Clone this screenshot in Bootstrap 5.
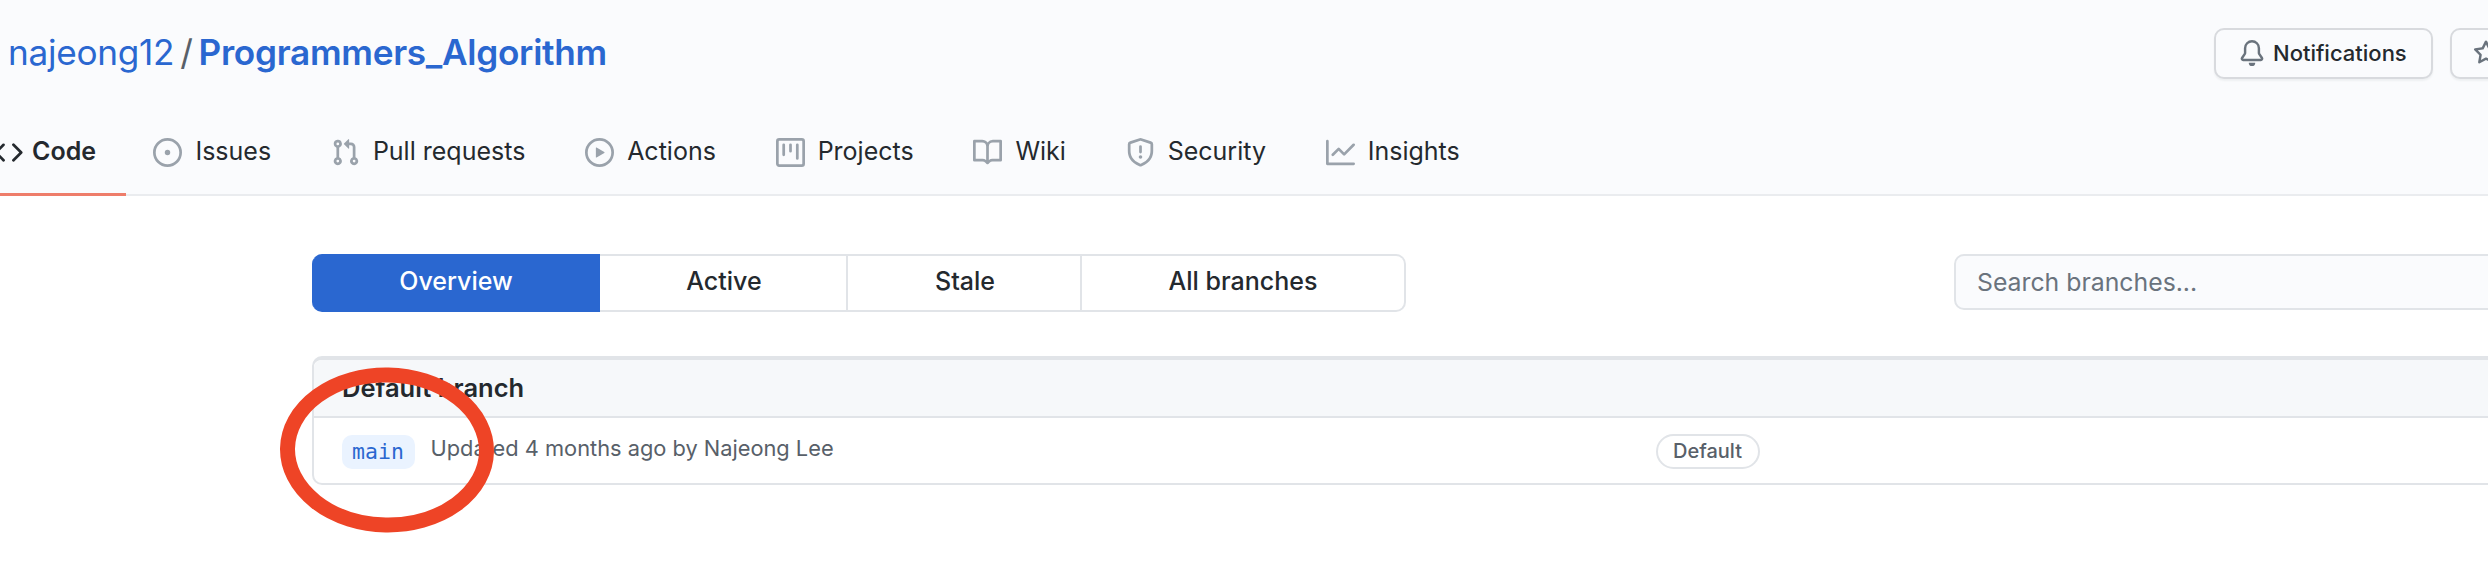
<!DOCTYPE html>
<html lang="en">
<head>
<meta charset="utf-8">
<title>Branches</title>
<link href="https://cdn.jsdelivr.net/npm/bootstrap@5.3.0/dist/css/bootstrap.min.css" rel="stylesheet">
<style>
html, body { margin: 0; height: 562px; overflow: hidden; background: #fff; }
body { font-family: Inter, "Liberation Sans", sans-serif; color: #24292e; position: relative; width: 2488px; }
.repo-head { background: #fafbfd; border-bottom: 2px solid #eaecef; height: 196px; width: 2488px; }
.repo-top { height: 106px; }
.repo-title { width: 600px; font-size: 35.2px; line-height: 40px; color: #2a67d0; margin-left: 8px; margin-top: -2px; letter-spacing: -.3px; }
.repo-title a { color: #2a67d0; text-decoration: none; }
.repo-title b { font-weight: 600; }
.repo-sep { color: #586069; margin: 0 6px; }
.act-btn { height: 51px; border: 2.5px solid #d8dade; border-radius: 10px; background: #fafbfd; font-size: 22px; font-weight: 500; color: #24292e; display: flex; align-items: center; box-shadow: 0 2px 2px rgba(27,31,35,.05); }
.act-notify { width: 219px; padding-left: 23px; gap: 8px; margin-left: 1606px; flex: none; }
.act-star { width: 120px; padding-left: 21px; margin-left: 17px; flex: none; }
.act-btn svg { fill: #6a737d; flex: none; }
.tab-row { height: 88px; margin-left: -40.5px; }
.tab-item { height: 90px; padding: 2px 29.9px 0; display: flex; align-items: center; gap: 13px; font-size: 25px; color: #24292e; text-decoration: none; flex: none; border-top: 3px solid transparent; border-bottom: 3px solid transparent; }
.tab-item svg { width: 29px; height: 29px; fill: #9aa2ab; flex: none; }
.tab-on { font-weight: 600; border-bottom-color: #ee7d6a; gap: 9px; padding-left: 34.5px; padding-right: 29.5px; margin-right: -2px; }
.tab-on svg { fill: #24292e; }
.branch-main { padding-left: 312px; padding-top: 58px; width: 2800px; }
.seg-wrap { width: 1094px; height: 58px; }
.seg-item { height: 58px; display: flex; align-items: center; justify-content: center; border: 2.5px solid #e1e4e8; border-left-width: 0; font-size: 25px; font-weight: 500; color: #24292e; background: #fff; text-decoration: none; flex: none; padding: 0 0 2px 2px; }
.seg-item:first-child { width: 288px; background: #2a67d0; border-color: #2a67d0; color: #fff; border-radius: 10px 0 0 10px; }
.seg-item:nth-child(2) { width: 248px; }
.seg-item:nth-child(3) { width: 234px; }
.seg-item:nth-child(4) { width: 324px; border-radius: 0 10px 10px 0; padding-left: 0; }
.branch-search { margin-left: 548px; width: 600px; height: 56px; flex: none; border: 2.5px solid #e1e4e8; border-radius: 10px; background: #fafbfd; font-size: 24.8px; padding: 0 21px; color: #24292e; outline: 0; }
.branch-search::placeholder { color: #6a737d; opacity: 1; }
.branch-panel { margin-top: 44px; width: 2300px; border: 2.5px solid #e1e4e8; border-top-width: 4px; border-radius: 10px 0 0 10px; }
.panel-head { height: 58px; background: #f6f8fa; border-bottom: 2px solid #e1e4e8; padding-left: 28px; font-size: 25.5px; font-weight: 600; display: flex; align-items: center; border-radius: 8px 0 0 0; }
.panel-line { height: 65px; position: relative; padding-left: 27.5px; display: flex; align-items: center; }
.panel-left { width: 1314px; flex: none; display: flex; align-items: center; gap: 16px; }
.branch-tag { width: 73px; height: 34px; border-radius: 10px; background: #eaf3ff; color: #2a67d0; font-family: "DejaVu Sans Mono", "Liberation Mono", monospace; font-size: 21.5px; display: flex; align-items: center; justify-content: center; margin-top: 3px; }
.branch-when { color: #586069; font-size: 21.8px; margin-top: -4px; }
.default-pill { width: 104px; height: 35px; border: 2px solid #e1e4e8; border-radius: 18px; color: #586069; font-size: 20px; font-weight: 500; display: flex; align-items: center; justify-content: center; margin-top: 1px; }
.mark-ring { position: absolute; left: 278px; top: 365px; width: 218px; height: 170px; pointer-events: none; }
</style>
</head>
<body>
<header class="repo-head">
  <div class="repo-top d-flex align-items-center">
    <div class="repo-title text-nowrap flex-shrink-0"><a href="#">najeong12</a><span class="repo-sep">/</span><a href="#"><b>Programmers_Algorithm</b></a></div>
    <a class="act-btn act-notify text-decoration-none" href="#">
      <svg width="26" height="26" viewBox="0 0 16 16"><path d="M8 16a2 2 0 001.985-1.75c.017-.137-.097-.25-.235-.25h-3.5c-.138 0-.252.113-.235.25A2 2 0 008 16z"/><path fill-rule="evenodd" d="M8 1.5A3.5 3.5 0 004.5 5v2.947c0 .346-.102.683-.294.97l-1.703 2.556a.018.018 0 00-.003.01l.001.006c0 .002.002.004.004.006a.017.017 0 00.006.004l.007.001h10.964l.007-.001a.018.018 0 00.01-.01l.001-.006a.018.018 0 00-.003-.01l-1.703-2.554a1.75 1.75 0 01-.294-.97V5A3.5 3.5 0 008 1.5zM3 5a5 5 0 0110 0v2.947c0 .05.015.098.042.139l1.703 2.555A1.518 1.518 0 0113.482 13H2.518a1.518 1.518 0 01-1.263-2.36l1.703-2.554A.25.25 0 003 7.947V5z"/></svg>
      Notifications
    </a>
    <a class="act-btn act-star text-decoration-none" href="#">
      <svg width="26" height="26" viewBox="0 0 16 16"><path fill-rule="evenodd" d="M8 .25a.75.75 0 01.673.418l1.882 3.815 4.21.612a.75.75 0 01.416 1.279l-3.046 2.97.719 4.192a.75.75 0 01-1.088.791L8 12.347l-3.766 1.98a.75.75 0 01-1.088-.79l.72-4.194L.818 6.374a.75.75 0 01.416-1.28l4.21-.611L7.327.668A.75.75 0 018 .25zm0 2.445L6.615 5.5a.75.75 0 01-.564.41l-3.097.45 2.24 2.184a.75.75 0 01.216.664l-.528 3.084 2.769-1.456a.75.75 0 01.698 0l2.77 1.456-.53-3.084a.75.75 0 01.216-.664l2.24-2.183-3.096-.45a.75.75 0 01-.564-.41L8 2.694z"/></svg>
    </a>
  </div>
  <nav class="tab-row d-flex">
    <a class="tab-item tab-on" href="#"><svg viewBox="0 0 16 16"><path fill-rule="evenodd" d="M4.72 3.22a.75.75 0 011.06 1.06L2.06 8l3.72 3.72a.75.75 0 11-1.06 1.06L.47 8.53a.75.75 0 010-1.06l4.25-4.25zm6.56 0a.75.75 0 10-1.06 1.06L13.94 8l-3.72 3.72a.75.75 0 101.06 1.06l4.25-4.25a.75.75 0 000-1.06l-4.25-4.25z"/></svg>Code</a>
    <a class="tab-item" href="#"><svg viewBox="0 0 16 16"><path d="M8 9.5a1.5 1.5 0 100-3 1.5 1.5 0 000 3z"/><path fill-rule="evenodd" d="M8 0a8 8 0 100 16A8 8 0 008 0zM1.5 8a6.5 6.5 0 1113 0 6.5 6.5 0 01-13 0z"/></svg>Issues</a>
    <a class="tab-item" href="#"><svg viewBox="0 0 16 16"><path fill-rule="evenodd" d="M7.177 3.073L9.573.677A.25.25 0 0110 .854v4.792a.25.25 0 01-.427.177L7.177 3.427a.25.25 0 010-.354zM3.75 2.5a.75.75 0 100 1.5.75.75 0 000-1.5zm-2.25.75a2.25 2.25 0 113 2.122v5.256a2.251 2.251 0 11-1.5 0V5.372A2.25 2.25 0 011.5 3.25zM11 2.5h-1V4h1a1 1 0 011 1v5.628a2.251 2.251 0 101.5 0V5A2.5 2.5 0 0011 2.5zm1 10.25a.75.75 0 111.5 0 .75.75 0 01-1.5 0zM3.75 12a.75.75 0 100 1.5.75.75 0 000-1.5z"/></svg>Pull requests</a>
    <a class="tab-item" href="#"><svg viewBox="0 0 16 16"><path fill-rule="evenodd" d="M1.5 8a6.5 6.5 0 1113 0 6.5 6.5 0 01-13 0zM8 0a8 8 0 100 16A8 8 0 008 0zM6.379 5.227A.25.25 0 006 5.442v5.117a.25.25 0 00.379.214l4.264-2.559a.25.25 0 000-.428L6.379 5.227z"/></svg>Actions</a>
    <a class="tab-item" href="#"><svg viewBox="0 0 16 16"><path fill-rule="evenodd" d="M1.75 0A1.75 1.75 0 000 1.75v12.5C0 15.216.784 16 1.75 16h12.5A1.75 1.75 0 0016 14.25V1.75A1.75 1.75 0 0014.25 0H1.75zM1.5 1.75a.25.25 0 01.25-.25h12.5a.25.25 0 01.25.25v12.5a.25.25 0 01-.25.25H1.75a.25.25 0 01-.25-.25V1.75zM11.75 3a.75.75 0 00-.75.75v7.5a.75.75 0 001.5 0v-7.5a.75.75 0 00-.75-.75zm-8.25.75a.75.75 0 011.5 0v5.5a.75.75 0 01-1.5 0v-5.5zM8 3a.75.75 0 00-.75.75v3.5a.75.75 0 001.5 0v-3.5A.75.75 0 008 3z"/></svg>Projects</a>
    <a class="tab-item" href="#"><svg viewBox="0 0 16 16"><path fill-rule="evenodd" d="M0 1.75A.75.75 0 01.75 1h4.253c1.227 0 2.317.59 3 1.501A3.744 3.744 0 0111.006 1h4.245a.75.75 0 01.75.75v10.5a.75.75 0 01-.75.75h-4.507a2.25 2.25 0 00-1.591.659l-.622.621a.75.75 0 01-1.06 0l-.622-.621A2.25 2.25 0 005.258 13H.75a.75.75 0 01-.75-.75V1.75zm8.755 3a2.25 2.25 0 012.25-2.25H14.5v9h-3.757c-.71 0-1.4.201-1.992.572l.004-7.322zm-1.504 7.324l.004-5.073-.002-2.253A2.25 2.25 0 005.003 2.5H1.5v9h3.757a3.75 3.75 0 011.994.574z"/></svg>Wiki</a>
    <a class="tab-item" href="#"><svg viewBox="0 0 16 16"><path fill-rule="evenodd" d="M7.467.133a1.75 1.75 0 011.066 0l5.25 1.68A1.75 1.75 0 0115 3.48V7c0 1.566-.32 3.182-1.303 4.682-.983 1.498-2.585 2.813-5.032 3.855a1.7 1.7 0 01-1.33 0c-2.447-1.042-4.049-2.357-5.032-3.855C1.32 10.182 1 8.566 1 7V3.48a1.75 1.75 0 011.217-1.667l5.25-1.68zm.61 1.429a.25.25 0 00-.153 0l-5.25 1.68a.25.25 0 00-.174.238V7c0 1.358.275 2.666 1.057 3.86.784 1.194 2.121 2.34 4.366 3.297a.2.2 0 00.154 0c2.245-.956 3.582-2.104 4.366-3.298C13.225 9.666 13.5 8.36 13.5 7V3.48a.25.25 0 00-.174-.237l-5.25-1.68zM9 10.5a1 1 0 11-2 0 1 1 0 012 0zm-.25-5.75a.75.75 0 10-1.5 0v3a.75.75 0 001.5 0v-3z"/></svg>Security</a>
    <a class="tab-item" href="#"><svg viewBox="0 0 16 16"><path fill-rule="evenodd" d="M1.5 1.75a.75.75 0 00-1.5 0v12.5c0 .414.336.75.75.75h14.5a.75.75 0 000-1.5H1.5V1.75zm14.28 2.53a.75.75 0 00-1.06-1.06L10 7.94 7.53 5.47a.75.75 0 00-1.06 0L3.22 8.72a.75.75 0 001.06 1.06L7 7.06l2.47 2.47a.75.75 0 001.06 0l5.25-5.25z"/></svg>Insights</a>
  </nav>
</header>
<main class="branch-main">
  <div class="d-flex align-items-start">
    <div class="seg-wrap d-flex flex-shrink-0">
      <a class="seg-item" href="#">Overview</a>
      <a class="seg-item" href="#">Active</a>
      <a class="seg-item" href="#">Stale</a>
      <a class="seg-item" href="#">All branches</a>
    </div>
    <input class="branch-search" type="text" placeholder="Search branches...">
  </div>
  <section class="branch-panel">
    <div class="panel-head">Default branch</div>
    <div class="panel-line">
      <div class="panel-left">
        <a class="branch-tag text-decoration-none" href="#">main</a>
        <span class="branch-when">Updated 4 months ago by Najeong Lee</span>
      </div>
      <span class="default-pill">Default</span>
    </div>
  </section>
</main>
<svg class="mark-ring" viewBox="0 0 218 170"><ellipse cx="109" cy="85" rx="99.5" ry="75" fill="none" stroke="#ee4426" stroke-width="15" transform="rotate(1 109 85)"/></svg>
</body>
</html>
